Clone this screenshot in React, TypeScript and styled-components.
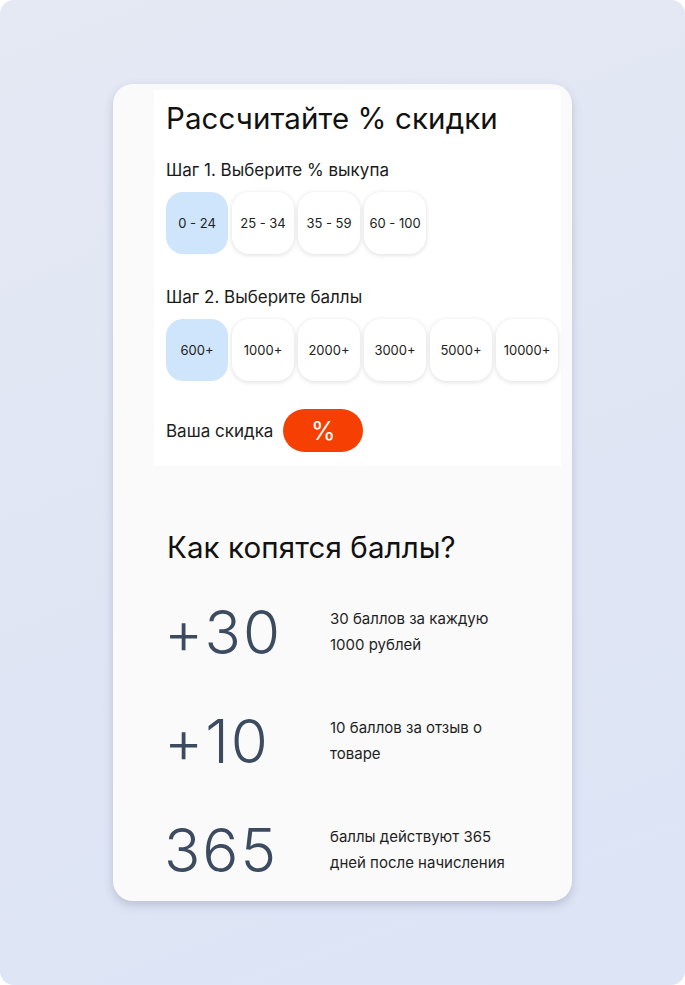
import * as React from 'react';
import styled, { createGlobalStyle } from 'styled-components';

const GlobalStyle = createGlobalStyle`
    html, body {
        margin: 0;
        padding: 0;
        background: #ffffff;
    }
    body {
        font-family: Inter, "Noto Sans", sans-serif;
        color: #1c1c1c;
    }
`

const ranges = ['0 - 24', '25 - 34', '35 - 59', '60 - 100']
const points = ['600+', '1000+', '2000+', '3000+', '5000+', '10000+']

const facts = [
    { value: '+30', text: ['30 баллов за каждую', '1000 рублей'] },
    { value: '+10', text: ['10 баллов за отзыв о', 'товаре'] },
    { value: '365', text: ['баллы действуют 365', 'дней после начисления'] },
]

const App = () => {
    const [range, setRange] = React.useState(ranges[0])
    const [point, setPoint] = React.useState(points[0])

    return (
        <>
            <GlobalStyle />
            <Frame>
                <Card>
                    <Calculator>
                        <Title>Рассчитайте % скидки</Title>
                        <Step>Шаг 1. Выберите % выкупа</Step>
                        <Options>
                            {ranges.map((e) => (
                                <Option key={e} active={e === range} onClick={() => setRange(e)}>
                                    {e}
                                </Option>
                            ))}
                        </Options>
                        <Step second>Шаг 2. Выберите баллы</Step>
                        <Options>
                            {points.map((e) => (
                                <Option key={e} active={e === point} onClick={() => setPoint(e)}>
                                    {e}
                                </Option>
                            ))}
                        </Options>
                        <Result>
                            <span>Ваша скидка</span>
                            <Discount>%</Discount>
                        </Result>
                    </Calculator>
                    <Earn>
                        <Title>Как копятся баллы?</Title>
                        <Facts>
                            {facts.map((f) => (
                                <Fact key={f.value}>
                                    <Big>{f.value}</Big>
                                    <Caption>
                                        {f.text[0]}
                                        <br />
                                        {f.text[1]}
                                    </Caption>
                                </Fact>
                            ))}
                        </Facts>
                    </Earn>
                </Card>
            </Frame>
        </>
    )
}

const Frame = styled.div`
    width: 685px;
    height: 985px;
    box-sizing: border-box;
    border-radius: 14px;
    background: linear-gradient(160deg, #e5e9f4 0%, #dfe5f4 60%, #dce4f6 100%);
    padding-top: 84px;
    display: flex;
    justify-content: center;
    align-items: flex-start;
`

const Card = styled.div`
    width: 459px;
    height: 817px;
    box-sizing: border-box;
    background: #fafafa;
    border-radius: 20px;
    box-shadow: 0 4px 10px rgba(90, 100, 130, 0.28);
    padding: 6px 11px 0 41px;
`

const Calculator = styled.div`
    background: #ffffff;
    height: 376px;
    box-sizing: border-box;
    padding: 10px 0 0 12px;
`

const Title = styled.h2`
    margin: 0;
    font-size: 29.5px;
    font-weight: 400;
    line-height: 36px;
    color: #111;
    letter-spacing: 0.1px;
`

const Step = styled.div<{ second?: boolean }>`
    margin-top: ${(p) => (p.second ? '32px' : '23px')};
    font-size: 17px;
    line-height: 22px;
    color: #1a1a1a;
`

const Options = styled.div`
    display: flex;
    gap: 4px;
    margin-top: 11px;
`

const Option = styled.button<{ active?: boolean }>`
    width: 62px;
    height: 62px;
    flex: none;
    border: none;
    border-radius: 17px;
    padding: 0;
    font-family: inherit;
    font-size: 13px;
    color: #222;
    cursor: pointer;
    background: ${(p) => (p.active ? '#cfe5fc' : '#ffffff')};
    box-shadow: ${(p) => (p.active ? 'none' : '0 1px 5px rgba(0, 0, 0, 0.14)')};
`

const Result = styled.div`
    display: flex;
    align-items: center;
    gap: 10px;
    margin-top: 28px;
    font-size: 17px;
`

const Discount = styled.div`
    width: 80px;
    height: 43px;
    border-radius: 22px;
    background: #f53f03;
    color: #fff;
    font-size: 25px;
    display: flex;
    align-items: center;
    justify-content: center;
`

const Earn = styled.div`
    padding: 63px 0 0 13px;
`

const Facts = styled.div`
    display: flex;
    flex-direction: column;
    gap: 49px;
    margin-top: 37px;
`

const Fact = styled.div`
    display: flex;
    align-items: center;
    height: 60px;
`

const Big = styled.div`
    width: 166px;
    flex: none;
    font-size: 60px;
    font-weight: 300;
    color: #3c4b60;
    line-height: 60px;
    letter-spacing: 2px;
    margin-left: -3px;
`

const Caption = styled.div`
    font-size: 15px;
    line-height: 26px;
    color: #1f1f1f;
`

export default App
